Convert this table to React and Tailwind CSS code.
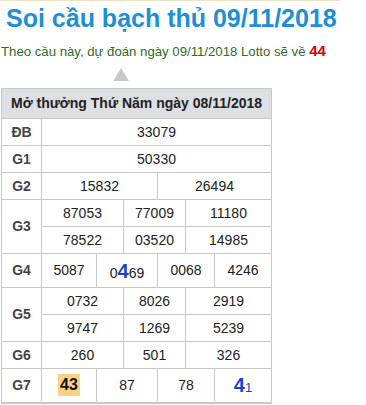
export default function App() {
    const cell = "border border-[#c8c8c8] text-center text-[14px] text-[#222]";
    const label = "border border-[#c8c8c8] text-center text-[14px] font-bold text-[#444]";

    return (
        <div className="w-[366px] h-[405px] bg-white overflow-hidden font-['Liberation_Sans',Arial,sans-serif]">
            <div className="w-[340px] h-px bg-[#efe1c4]"></div>

            <h1 className="ml-[6px] mt-[1px] text-[25px] leading-[32px] font-bold text-[#1e8fd6]">
                Soi cầu bạch thủ 09/11/2018
            </h1>

            <p className="ml-px mt-[8px] text-[13.2px] leading-[18px] text-[#2f6b1f]">
                Theo cầu này, dự đoán ngày 09/11/2018 Lotto sẽ về{" "}
                <span className="text-[15px] font-bold text-[#e00000]">44</span>
            </p>

            <div className="ml-[113px] mt-[7px] w-0 h-0 border-l-[8px] border-r-[8px] border-b-[13px] border-l-transparent border-r-transparent border-b-[#c8c8c8]"></div>

            <table className="ml-px mt-[7px] w-[270px] table-fixed border-collapse border-b-2 border-b-[#c8c8c8]">
                <colgroup>
                    <col className="w-[40px]" />
                    <col className="w-[55px]" />
                    <col className="w-[27px]" />
                    <col className="w-[34px]" />
                    <col className="w-[28px]" />
                    <col className="w-[29px]" />
                    <col className="w-[57px]" />
                </colgroup>
                <tbody>
                    <tr className="h-[30px]">
                        <th colSpan={7} className="border border-[#c8c8c8] bg-[#dedfe3] text-[14px] font-bold text-[#222]">
                            Mở thưởng Thứ Năm ngày 08/11/2018
                        </th>
                    </tr>
                    <tr className="h-[27px]">
                        <td className={label}>ĐB</td>
                        <td colSpan={6} className={cell}>33079</td>
                    </tr>
                    <tr className="h-[27px]">
                        <td className={label}>G1</td>
                        <td colSpan={6} className={cell}>50330</td>
                    </tr>
                    <tr className="h-[27px]">
                        <td className={label}>G2</td>
                        <td colSpan={3} className={cell}>15832</td>
                        <td colSpan={3} className={cell}>26494</td>
                    </tr>
                    <tr className="h-[27px]">
                        <td rowSpan={2} className={label}>G3</td>
                        <td colSpan={2} className={cell}>87053</td>
                        <td colSpan={2} className={cell}>77009</td>
                        <td colSpan={2} className={cell}>11180</td>
                    </tr>
                    <tr className="h-[27px]">
                        <td colSpan={2} className={cell}>78522</td>
                        <td colSpan={2} className={cell}>03520</td>
                        <td colSpan={2} className={cell}>14985</td>
                    </tr>
                    <tr className="h-[34px]">
                        <td className={label}>G4</td>
                        <td className={cell}>5087</td>
                        <td colSpan={2} className={cell}>
                            0<span className="text-[20px] font-bold text-[#1a3fd0]">4</span>69
                        </td>
                        <td colSpan={2} className={cell}>0068</td>
                        <td className={cell}>4246</td>
                    </tr>
                    <tr className="h-[27px]">
                        <td rowSpan={2} className={label}>G5</td>
                        <td colSpan={2} className={cell}>0732</td>
                        <td colSpan={2} className={cell}>8026</td>
                        <td colSpan={2} className={cell}>2919</td>
                    </tr>
                    <tr className="h-[27px]">
                        <td colSpan={2} className={cell}>9747</td>
                        <td colSpan={2} className={cell}>1269</td>
                        <td colSpan={2} className={cell}>5239</td>
                    </tr>
                    <tr className="h-[27px]">
                        <td className={label}>G6</td>
                        <td colSpan={2} className={cell}>260</td>
                        <td colSpan={2} className={cell}>501</td>
                        <td colSpan={2} className={cell}>326</td>
                    </tr>
                    <tr className="h-[34px]">
                        <td className={label}>G7</td>
                        <td className={cell}>
                            <span className="inline-block px-[2px] leading-[22px] bg-[#fcd185] text-[16px] font-bold text-[#111]">43</span>
                        </td>
                        <td colSpan={2} className={cell}>87</td>
                        <td colSpan={2} className={cell}>78</td>
                        <td className={cell}>
                            <span className="text-[20px] font-bold text-[#1a3fd0]">4</span>
                            <span className="text-[13px] text-[#1a3fd0]">1</span>
                        </td>
                    </tr>
                </tbody>
            </table>
        </div>
    );
}
